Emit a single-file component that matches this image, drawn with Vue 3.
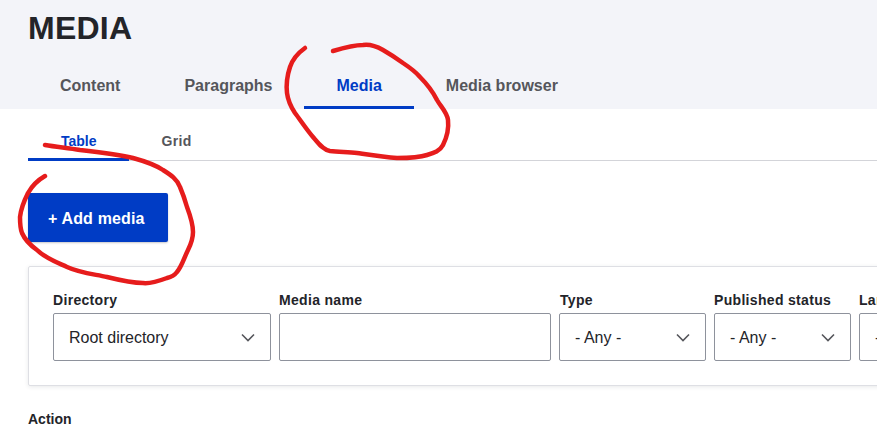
<script setup>
const tabs = [
  { label: 'Content' },
  { label: 'Paragraphs' },
  { label: 'Media', active: true },
  { label: 'Media browser' },
]
const subTabs = [{ label: 'Table', active: true }, { label: 'Grid' }]
const filters = [
  { label: 'Directory', value: 'Root directory', cls: 'w-dir', select: true },
  { label: 'Media name', value: '', cls: 'w-name' },
  { label: 'Type', value: '- Any -', cls: 'w-type', select: true },
  { label: 'Published status', value: '- Any -', cls: 'w-pub', select: true },
  { label: 'Language', value: '- Any -', cls: 'w-lang', select: true },
]
</script>

<template>
  <div class="page">
    <header class="head">
      <h1 class="title">MEDIA</h1>
      <nav class="tabs">
        <a v-for="t in tabs" :key="t.label" class="tab" :class="{ active: t.active }">{{ t.label }}</a>
      </nav>
    </header>
    <main class="body">
      <nav class="subtabs">
        <a v-for="t in subTabs" :key="t.label" class="subtab" :class="{ active: t.active }">{{ t.label }}</a>
      </nav>
      <button class="add">+ Add media</button>
      <section class="panel">
        <div v-for="f in filters" :key="f.label" class="field" :class="f.cls">
          <div class="label">{{ f.label }}</div>
          <div class="control">
            <span class="value">{{ f.value }}</span>
            <svg v-if="f.select" class="chev" width="14" height="9" viewBox="0 0 14 9">
              <path d="M1 1.5l6 6 6-6" fill="none" stroke="#55565b" stroke-width="1.6" />
            </svg>
          </div>
        </div>
      </section>
      <div class="action">Action</div>
    </main>
    <svg class="ink" width="877" height="430" viewBox="0 0 877 430">
      <path d="M305 48C298 53 293 58 290 67C287 76 286 84 287 93C288 101 291 107 295 113C301 121 307 130 313 137C318 143 323 150 330 151C339 152 348 152 357 153C371 155 384 157 397 158C408 158 418 158 427 155C434 153 440 151 443 145C447 137 449 129 448 120C447 112 441 107 437 100C433 92 427 84 420 77C415 71 409 67 403 63C396 58 390 54 383 50C376 46 370 44 363 45C353 45 343 48 333 51" />
      <path d="M45 145C57 147 68 148 80 150C98 152 116 154 133 158C144 161 154 164 163 170C171 175 177 179 180 187C183 194 185 200 187 207C190 215 193 223 193 232C193 239 191 244 188 250C184 258 182 266 177 272C174 276 171 277 167 278C159 281 151 284 143 283C131 283 119 280 107 277C93 274 80 273 67 267C56 262 45 258 37 250C30 245 25 240 22 233C20 228 20 222 20 217C21 208 24 201 28 193C32 186 38 180 45 176" />
    </svg>
  </div>
</template>

<style>
html, body { margin: 0; background: #fff; overflow: hidden; }
</style>

<style scoped>
.page {
  position: relative;
  width: 877px;
  height: 430px;
  overflow: hidden;
  font-family: "Liberation Sans", Arial, sans-serif;
  color: #232429;
}
.head {
  height: 109px;
  box-sizing: border-box;
  padding: 9px 0 0 28px;
  background: #f3f4f9;
}
.title {
  margin: 0;
  font-size: 32px;
  line-height: 38px;
  font-weight: 700;
  letter-spacing: 0.25px;
}
.tabs {
  display: flex;
  margin-top: 15px;
}
.tab {
  height: 47px;
  box-sizing: border-box;
  padding: 0 32px;
  font-size: 16px;
  font-weight: 700;
  line-height: 47px;
  color: #55565b;
}
.tab.active {
  color: #003cc5;
  border-bottom: 3px solid #003cc5;
}
.body {
  padding: 0 0 0 28px;
}
.subtabs {
  display: flex;
  height: 52px;
  box-sizing: border-box;
  border-bottom: 1px solid #d3d4d9;
}
.subtab {
  height: 52px;
  box-sizing: border-box;
  padding: 24px 32px 0 33px;
  font-size: 14px;
  font-weight: 700;
  line-height: 16px;
  color: #55565b;
}
.subtab + .subtab { letter-spacing: 0.3px; }
.subtab.active {
  color: #003cc5;
  border-bottom: 3px solid #003cc5;
}
.add {
  display: block;
  width: 140px;
  height: 49px;
  margin-top: 32px;
  padding: 2px 0 0 20px;
  border: 0;
  border-radius: 2px;
  background: #003cc5;
  color: #fff;
  font: 700 16px "Liberation Sans", Arial, sans-serif;
  letter-spacing: 0.15px;
  text-align: left;
  box-shadow: 0 1px 2px rgba(34, 35, 48, 0.25);
}
.panel {
  display: flex;
  gap: 8px;
  width: 1000px;
  height: 120px;
  box-sizing: border-box;
  margin-top: 24px;
  padding: 25px 24px 24px;
  border: 1px solid #dedfe4;
  border-radius: 2px;
  box-shadow: 0 1px 4px rgba(34, 35, 48, 0.1);
}
.field { flex: none; }
.w-dir { width: 218px; }
.w-name { width: 272px; }
.w-type { width: 147px; }
.w-type .label { text-indent: 1px; }
.w-pub { width: 137px; }
.w-lang { width: 137px; }
.label {
  font-size: 14px;
  font-weight: 700;
  line-height: 16px;
  height: 21px;
  letter-spacing: 0.32px;
}
.control {
  display: flex;
  align-items: center;
  justify-content: space-between;
  height: 48px;
  box-sizing: border-box;
  padding: 0 15px;
  border: 1px solid #8e929c;
  border-radius: 2px;
  font-size: 16px;
}
.value { padding-top: 2px; }
.chev { flex: none; }
.action {
  margin-top: 25px;
  font-size: 14px;
  font-weight: 700;
  line-height: 16px;
}
.ink {
  position: absolute;
  left: 0;
  top: 0;
  pointer-events: none;
}
.ink path {
  fill: none;
  stroke: #e61c1c;
  stroke-width: 4.5;
  stroke-linecap: round;
  stroke-linejoin: round;
}
</style>
